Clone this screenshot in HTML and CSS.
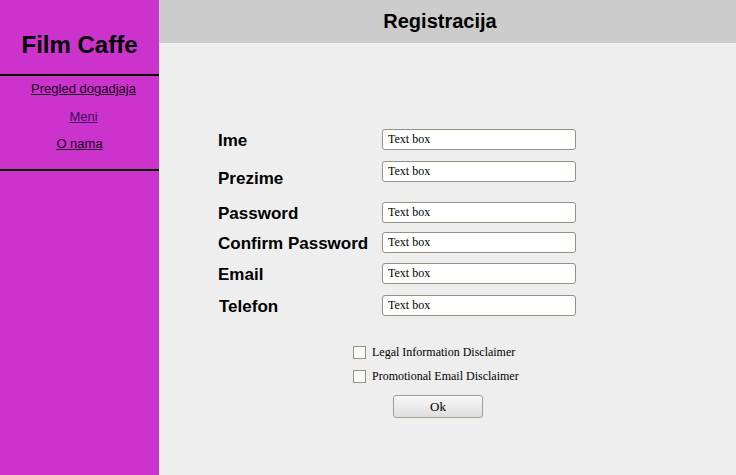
FILE: index.html
```html
<!DOCTYPE html>
<html>
<head>
<meta charset="utf-8">
<title>Registracija</title>
<link rel="stylesheet" href="styles.css">
</head>
<body>
<div class="page">
  <aside class="sidebar">
    <div class="brand">Film Caffe</div>
    <nav class="nav">
      <a href="#" class="nav-link">Pregled dogadjaja</a>
      <a href="#" class="nav-link visited">Meni</a>
      <a href="#" class="nav-link last">O nama</a>
    </nav>
  </aside>
  <main class="main">
    <header class="header">Registracija</header>
    <form class="form">
      <div class="row">
        <label class="label">Ime</label>
        <input class="field" type="text" value="Text box">
      </div>
      <div class="row gap-11">
        <label class="label low">Prezime</label>
        <input class="field" type="text" value="Text box">
      </div>
      <div class="row gap-20">
        <label class="label">Password</label>
        <input class="field" type="text" value="Text box">
      </div>
      <div class="row gap-9">
        <label class="label">Confirm Password</label>
        <input class="field" type="text" value="Text box">
      </div>
      <div class="row gap-10">
        <label class="label">Email</label>
        <input class="field" type="text" value="Text box">
      </div>
      <div class="row gap-11">
        <label class="label indent">Telefon</label>
        <input class="field" type="text" value="Text box">
      </div>
      <div class="checks">
        <label class="check"><input type="checkbox" class="box"><span>Legal Information Disclaimer</span></label>
        <label class="check"><input type="checkbox" class="box"><span>Promotional Email Disclaimer</span></label>
      </div>
      <div class="actions">
        <button type="button" class="btn">Ok</button>
      </div>
    </form>
  </main>
</div>
</body>
</html>
```
FILE: styles.css
```css
html, body {
  margin: 0;
  padding: 0;
  height: 100%;
}
body {
  background: #eeeeee;
  font-family: "Liberation Sans", Arial, sans-serif;
}
.page {
  display: flex;
  height: 475px;
}
.sidebar {
  width: 159px;
  flex: none;
  background: #cc33cc;
}
.brand {
  padding: 31px 0 15px;
  line-height: 28px;
  font-size: 24px;
  font-weight: bold;
  text-align: center;
  color: #000;
  border-bottom: 2px solid #000;
}
.nav {
  display: flex;
  flex-direction: column;
  align-items: center;
  padding: 5px 0 18px 8px;
  border-bottom: 2px solid #000;
}
.nav-link {
  display: block;
  font-size: 13px;
  line-height: 15px;
  color: #200020;
  text-decoration: underline;
  margin-bottom: 13px;
}
.nav-link.visited {
  color: #40105a;
  margin-bottom: 12px;
}
.nav-link.last {
  margin-bottom: 0;
  margin-right: 8px;
}
.main {
  flex: 1;
  display: flex;
  flex-direction: column;
}
.header {
  height: 43px;
  line-height: 43px;
  background: #cccccc;
  font-size: 20px;
  font-weight: bold;
  text-align: center;
  padding-right: 15px;
  color: #000;
}
.form {
  padding: 86px 0 0 59px;
  display: flex;
  flex-direction: column;
}
.row {
  display: flex;
  align-items: flex-start;
  height: 21px;
}
.gap-9 { margin-top: 9px; }
.gap-10 { margin-top: 10px; }
.gap-11 { margin-top: 11px; }
.gap-20 { margin-top: 20px; }
.label {
  width: 164px;
  flex: none;
  padding-top: 1px;
  font-size: 17px;
  font-weight: bold;
  line-height: 21px;
  color: #000;
}
.label.low { padding-top: 7px; }
.label.indent { padding-left: 1px; width: 163px; }
.field {
  box-sizing: border-box;
  width: 194px;
  height: 21px;
  margin: 0;
  padding: 0 5px;
  border: 1px solid #9b8f82;
  border-radius: 3px;
  background: #fff;
  font-family: "Liberation Serif", "Times New Roman", serif;
  font-size: 12px;
  color: #000;
  outline: none;
}
.checks {
  margin-top: 30px;
  padding-left: 135px;
  display: flex;
  flex-direction: column;
  gap: 11px;
}
.check {
  display: flex;
  align-items: center;
  gap: 6px;
  height: 13px;
  font-family: "Liberation Serif", "Times New Roman", serif;
  font-size: 12px;
  color: #000;
}
.box {
  appearance: none;
  -webkit-appearance: none;
  box-sizing: border-box;
  width: 13px;
  height: 13px;
  margin: 0;
  border: 1px solid #9b8f82;
  background: #fafafa;
  flex: none;
}
.actions {
  margin-top: 12px;
  padding-left: 175px;
}
.btn {
  box-sizing: border-box;
  width: 90px;
  height: 23px;
  margin: 0;
  padding: 0;
  border: 1px solid #a89c90;
  border-radius: 3px;
  background: linear-gradient(#f8f8f8, #dedede);
  font-family: "Liberation Serif", "Times New Roman", serif;
  font-size: 13px;
  color: #000;
}
```
